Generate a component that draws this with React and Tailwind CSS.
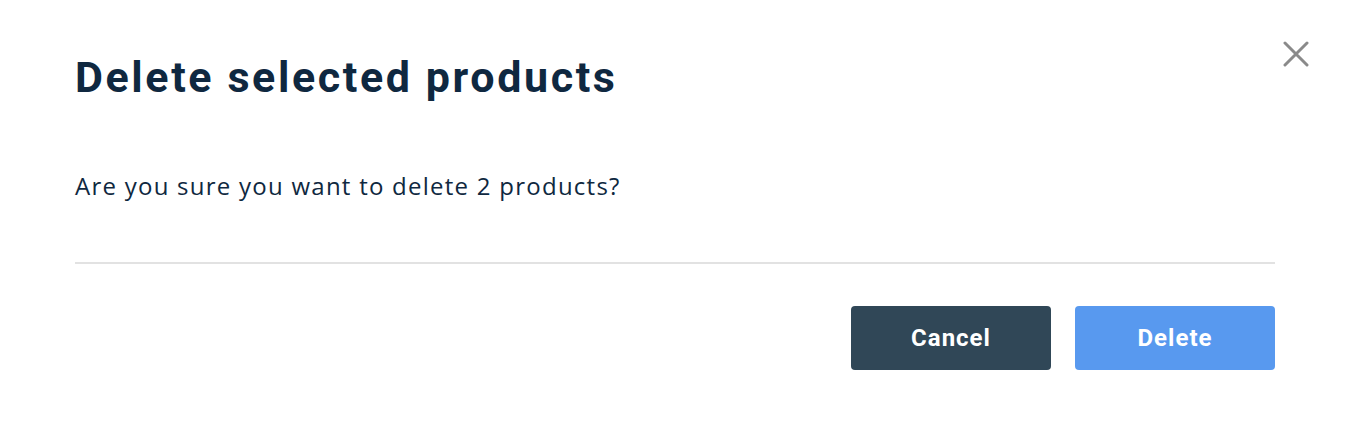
import React from 'react';

const CloseIcon = () => (
  <svg width="26" height="26" viewBox="0 0 26 26" fill="none">
    <path d="M2 2L24 24M24 2L2 24" stroke="#8a8a8a" strokeWidth="3" strokeLinecap="round" />
  </svg>
);

const App = () => {
  return (
    <div className="relative w-[1352px] h-[446px] bg-white pl-[75px] pr-[77px] pt-[52px]">
      {/* Close */}
      <button className="absolute top-[41px] right-[43px] p-0">
        <CloseIcon />
      </button>

      {/* Header */}
      <h1 className="text-[43px] leading-[50px] font-bold tracking-[2.6px] text-[#0f2840] font-['Roboto',sans-serif]">
        Delete selected products
      </h1>

      {/* Body */}
      <p className="mt-[69px] text-[24px] leading-[30px] tracking-[1.25px] text-[#0f2840] font-['Open_Sans',sans-serif]">
        Are you sure you want to delete 2 products?
      </p>

      <div className="mt-[61px] h-[2px] bg-[#e2e2e2]" />

      {/* Actions */}
      <div className="flex justify-end gap-6 mt-[42px]">
        <button className="w-[200px] h-16 rounded bg-[#304757] text-white text-[24px] font-bold tracking-[1px] font-['Roboto',sans-serif]">
          Cancel
        </button>
        <button className="w-[200px] h-16 rounded bg-[#5899ef] text-white text-[24px] font-bold tracking-[1px] font-['Roboto',sans-serif]">
          Delete
        </button>
      </div>
    </div>
  );
};

export default App;
